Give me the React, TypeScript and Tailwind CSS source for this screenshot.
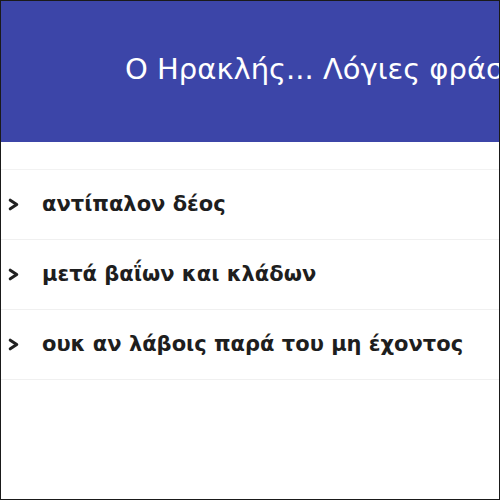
import React from 'react';

const phrases = [
    'αντίπαλον δέος',
    'μετά βαΐων και κλάδων',
    'ουκ αν λάβοις παρά του μη έχοντος',
];

const Chevron = () => (
    <svg viewBox="0 0 10 12" className="w-[11px] h-[13px] shrink-0" fill="none" stroke="#222" strokeWidth="2.8" strokeLinecap="round" strokeLinejoin="round">
        <path d="M2 2 L8 6 L2 10" />
    </svg>
);

export default function App() {
    return (
        <div className="w-[500px] h-[500px] overflow-hidden bg-white border border-[#1a1a1a] flex flex-col" style={{ fontFamily: '"DejaVu Sans", Verdana, sans-serif' }}>
            <header className="h-[141px] shrink-0 bg-[#3c45a8] flex items-center pl-[124px] pb-[4px] overflow-hidden">
                <h1 className="text-white text-[29px] whitespace-nowrap leading-none">Ο Ηρακλής... Λόγιες φράσεις</h1>
            </header>
            <div className="h-[28px] border-b border-[#f2f2f2]" />
            <ul>
                {phrases.map(p => (
                    <li key={p} className="h-[70px] flex items-center gap-[23px] pl-[7px] border-b border-[#f0f0f0]">
                        <Chevron />
                        <span className="text-[21px] font-bold text-[#1e1e1e] whitespace-nowrap">{p}</span>
                    </li>
                ))}
            </ul>
        </div>
    );
}
